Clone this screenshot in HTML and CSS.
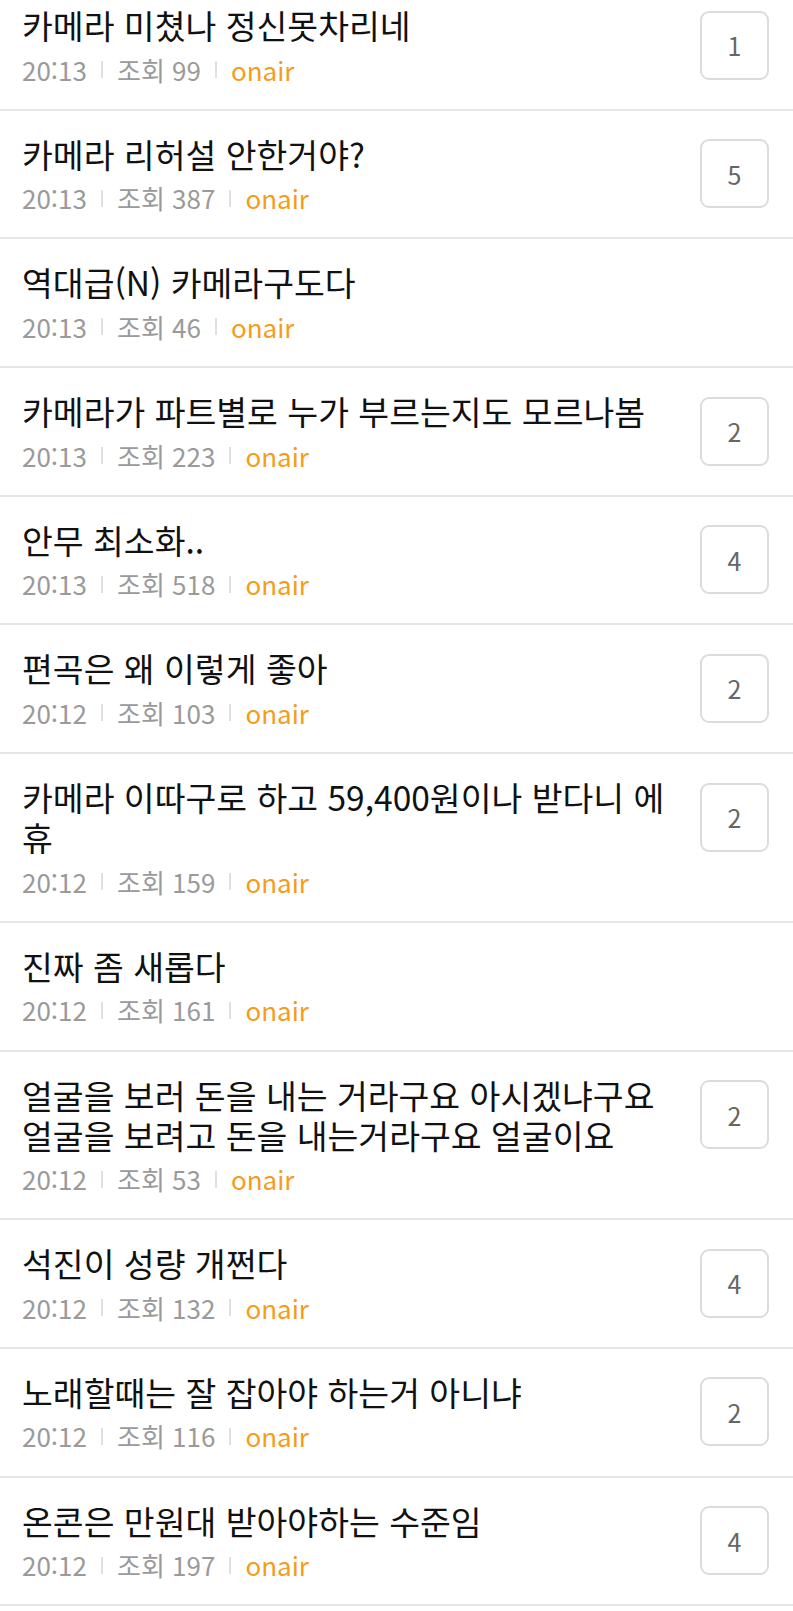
FILE: index.html
```html
<!DOCTYPE html>
<html lang="ko">
<head>
<meta charset="utf-8">
<link rel="stylesheet" href="styles.css">
</head>
<body>
<ul class="list">
  <li class="item">
    <div class="body">
      <div class="title">카메라 미쳤나 정신못차리네</div>
      <div class="meta"><span class="time">20:13</span><span class="sep"></span><span class="views">조회 99</span><span class="sep"></span><span class="board">onair</span></div>
    </div>
    <div class="badge">1</div>
  </li>
  <li class="item">
    <div class="body">
      <div class="title">카메라 리허설 안한거야?</div>
      <div class="meta"><span class="time">20:13</span><span class="sep"></span><span class="views">조회 387</span><span class="sep"></span><span class="board">onair</span></div>
    </div>
    <div class="badge">5</div>
  </li>
  <li class="item">
    <div class="body">
      <div class="title">역대급(N) 카메라구도다</div>
      <div class="meta"><span class="time">20:13</span><span class="sep"></span><span class="views">조회 46</span><span class="sep"></span><span class="board">onair</span></div>
    </div>
  </li>
  <li class="item">
    <div class="body">
      <div class="title">카메라가 파트별로 누가 부르는지도 모르나봄</div>
      <div class="meta"><span class="time">20:13</span><span class="sep"></span><span class="views">조회 223</span><span class="sep"></span><span class="board">onair</span></div>
    </div>
    <div class="badge">2</div>
  </li>
  <li class="item">
    <div class="body">
      <div class="title">안무 최소화..</div>
      <div class="meta"><span class="time">20:13</span><span class="sep"></span><span class="views">조회 518</span><span class="sep"></span><span class="board">onair</span></div>
    </div>
    <div class="badge">4</div>
  </li>
  <li class="item">
    <div class="body">
      <div class="title">편곡은 왜 이렇게 좋아</div>
      <div class="meta"><span class="time">20:12</span><span class="sep"></span><span class="views">조회 103</span><span class="sep"></span><span class="board">onair</span></div>
    </div>
    <div class="badge">2</div>
  </li>
  <li class="item">
    <div class="body">
      <div class="title">카메라 이따구로 하고 59,400원이나 받다니 에휴</div>
      <div class="meta"><span class="time">20:12</span><span class="sep"></span><span class="views">조회 159</span><span class="sep"></span><span class="board">onair</span></div>
    </div>
    <div class="badge">2</div>
  </li>
  <li class="item">
    <div class="body">
      <div class="title">진짜 좀 새롭다</div>
      <div class="meta"><span class="time">20:12</span><span class="sep"></span><span class="views">조회 161</span><span class="sep"></span><span class="board">onair</span></div>
    </div>
  </li>
  <li class="item">
    <div class="body">
      <div class="title">얼굴을 보러 돈을 내는 거라구요 아시겠냐구요 얼굴을 보려고 돈을 내는거라구요 얼굴이요</div>
      <div class="meta"><span class="time">20:12</span><span class="sep"></span><span class="views">조회 53</span><span class="sep"></span><span class="board">onair</span></div>
    </div>
    <div class="badge">2</div>
  </li>
  <li class="item">
    <div class="body">
      <div class="title">석진이 성량 개쩐다</div>
      <div class="meta"><span class="time">20:12</span><span class="sep"></span><span class="views">조회 132</span><span class="sep"></span><span class="board">onair</span></div>
    </div>
    <div class="badge">4</div>
  </li>
  <li class="item">
    <div class="body">
      <div class="title">노래할때는 잘 잡아야 하는거 아니냐</div>
      <div class="meta"><span class="time">20:12</span><span class="sep"></span><span class="views">조회 116</span><span class="sep"></span><span class="board">onair</span></div>
    </div>
    <div class="badge">2</div>
  </li>
  <li class="item">
    <div class="body">
      <div class="title">온콘은 만원대 받아야하는 수준임</div>
      <div class="meta"><span class="time">20:12</span><span class="sep"></span><span class="views">조회 197</span><span class="sep"></span><span class="board">onair</span></div>
    </div>
    <div class="badge">4</div>
  </li>
</ul>
</body>
</html>
```
FILE: styles.css
```css
html, body {
  margin: 0;
  padding: 0;
  background: #fff;
}
body {
  font-family: "Noto Sans CJK KR", "Noto Sans", sans-serif;
  color: #111;
}
.list {
  list-style: none;
  margin: 0;
  padding: 0;
}
.item {
  display: flex;
  align-items: flex-start;
  gap: 24px;
  padding: 23px 24px 21.2px 22px;
  border-bottom: 2px solid #e6e6e6;
}
.item:first-child {
  padding-top: 5px;
}
.body {
  flex: 1;
  min-width: 0;
}
.title {
  font-size: 33.5px;
  line-height: 40px;
  color: #111;
}
.meta {
  display: flex;
  align-items: center;
  margin-top: 6.5px;
  font-size: 26px;
  line-height: 36px;
  color: #9a9a9a;
}
.sep {
  width: 2px;
  height: 17px;
  background: #e0e0e0;
  margin: 0 14px;
}
.board {
  color: #f59c1a;
}
.badge {
  flex: none;
  width: 69px;
  height: 69px;
  margin-top: 5.5px;
  box-sizing: border-box;
  border: 2px solid #dcdcdc;
  border-radius: 9px;
  display: flex;
  align-items: center;
  justify-content: center;
  font-size: 25px;
  color: #666;
}
```
